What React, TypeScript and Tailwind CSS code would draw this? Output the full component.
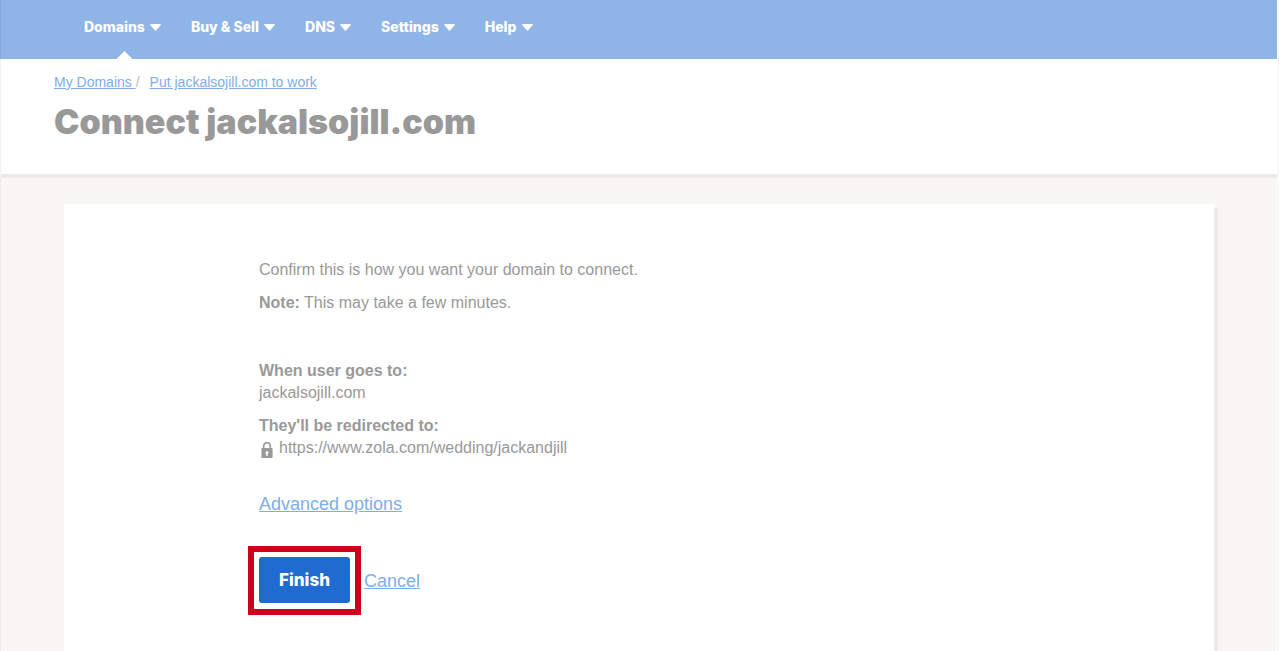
interface NavItem {
  label: string;
  active?: boolean;
}

const navItems: NavItem[] = [
  { label: 'Domains', active: true },
  { label: 'Buy & Sell' },
  { label: 'DNS' },
  { label: 'Settings' },
  { label: 'Help' },
];

const linkClass = 'text-[#7eaee8] underline';

const Caret = () => (
  <svg viewBox="0 0 11 7" className="h-[7px] w-[11px] fill-current" aria-hidden="true">
    <path d="M.7 0h9.600c.6 0 .8.500.5 1L6 6.600a.7.7 0 0 1-1 0L.2 1C-.1.500.1 0 .7 0Z" />
  </svg>
);

const LockIcon = () => (
  <svg viewBox="0 0 12 16" className="h-4 w-3" aria-hidden="true">
    <path d="M2.7 7V4.100a3.300 3.300 0 0 1 6.600 0V7" fill="none" stroke="currentColor" strokeWidth="1.600" />
    <path
      d="M1.200 6h9.600c.4 0 .8.4.8.8v8.400c0 .4-.4.8-.8.8H1.200c-.4 0-.8-.4-.8-.8V6.800c0-.4.4-.8.8-.8Z"
      fill="currentColor"
    />
    <path d="M6 9.200a1.500 1.500 0 0 1 .7 2.800V14H5.300v-2A1.500 1.500 0 0 1 6 9.200Z" fill="#fff" />
  </svg>
);

const TopNav = () => (
  <nav className="h-[59px] border-l border-black/5 bg-[#8fb4e8] pl-[83px]">
    <ul className="flex h-full gap-[30px]">
      {navItems.map((item) => (
        <li key={item.label} className="relative">
          <button
            type="button"
            className="flex h-[54px] items-center gap-[5px] font-[Inter,sans-serif] text-sm font-extrabold text-white"
          >
            {item.label}
            <Caret />
          </button>
          {item.active && (
            <span className="absolute bottom-0 left-1/2 -ml-1.5 h-2 w-4 bg-white [clip-path:polygon(50%_0,100%_100%,0_100%)]" />
          )}
        </li>
      ))}
    </ul>
  </nav>
);

const PageHeader = () => (
  <header className="border-l border-black/5 bg-white">
    <div className="h-[119px] border-b-4 border-[#ebebea] pt-3 pl-[53px]">
      <div className="flex text-sm leading-[22px] text-[#bbb]">
        <a href="#domains" className={`${linkClass} whitespace-pre`}>
          {'My Domains '}
        </a>
        <span className="pr-[10px]">/</span>
        <a href="#work" className={linkClass}>
          Put jackalsojill.com to work
        </a>
      </div>
      <h1 className="mt-2 font-[Inter,sans-serif] text-[34px] leading-[42px] font-black">
        Connect jackalsojill.com
      </h1>
    </div>
  </header>
);

export default function App() {
  return (
    <div className="min-h-screen border-r border-[#f1f1f1] bg-white pr-px font-['Liberation_Sans',Arial,sans-serif] text-base leading-[22px] text-[#999]">
      <div className="flex min-h-screen flex-col overflow-hidden">
        <TopNav />
        <PageHeader />

        <div className="flex flex-1 border-l border-black/5 bg-[#f8f7f5] px-[63px] pt-[26px]">
          <main className="flex-1 bg-white pt-[55px] pl-[195px] shadow-[4px_4px_0_#ebebea]">
            <p>Confirm this is how you want your domain to connect.</p>
            <p className="mt-[11px]">
              <strong>Note:</strong> This may take a few minutes.
            </p>

            <dl className="mt-[46px]">
              <dt className="font-bold">When user goes to:</dt>
              <dd>jackalsojill.com</dd>
              <dt className="mt-[11px] font-bold">They'll be redirected to:</dt>
              <dd className="flex items-end gap-[6px] pl-[2px] leading-[21px]">
                <LockIcon />
                https://www.zola.com/wedding/jackandjill
              </dd>
            </dl>

            <a href="#advanced" className={`${linkClass} mt-8 inline-block text-lg`}>
              Advanced options
            </a>

            <div className="mt-7 -ml-[11px] flex items-center gap-[3px] text-lg">
              <div className="border-6 border-[#d0021b] p-[5px] pb-[6px]">
                <button
                  type="button"
                  className="block h-[46px] rounded-[3px] bg-[#1f6bd0] px-5 font-[Inter,sans-serif] text-[17px] font-extrabold text-white"
                >
                  Finish
                </button>
              </div>
              <a href="#cancel" className={linkClass}>
                Cancel
              </a>
            </div>
          </main>
        </div>
      </div>
    </div>
  );
}
